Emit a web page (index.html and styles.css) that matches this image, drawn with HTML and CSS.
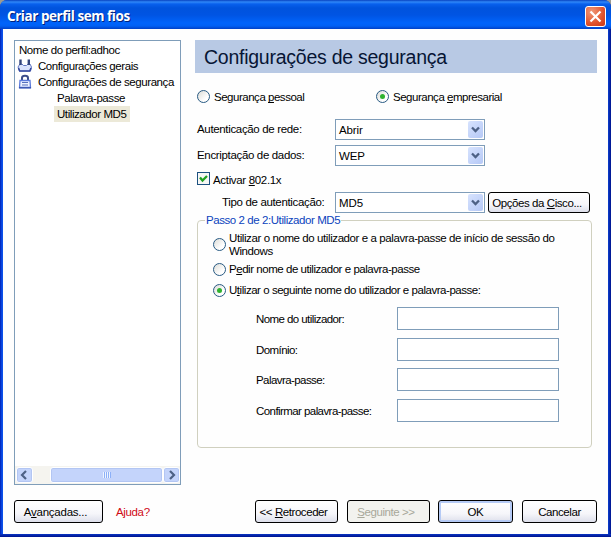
FILE: index.html
```html
<!DOCTYPE html>
<html lang="pt">
<head>
<meta charset="utf-8">
<title>Criar perfil sem fios</title>
<link rel="stylesheet" href="styles.css">
</head>
<body>
<div class="window">
  <header class="titlebar">
    <h1>Criar perfil sem fios</h1>
    <button class="close" aria-label="Fechar"><svg width="19" height="19" viewBox="0 0 19 19"><path d="M4.500 4.500l10 10M14.500 4.500l-10 10" stroke="#fff" stroke-width="2.200"/></svg></button>
  </header>
  <div class="client">
    <main class="panes">
      <nav class="tree">
        <ul>
          <li class="root">Nome do perfil:adhoc</li>
          <li class="node"><svg width="16" height="16" viewBox="0 0 16 16"><path d="M3 6h2l1.500 1.500h3L11 6h2l1.500 3-1 4h-11L1 9z" fill="#dbe3fc" stroke="#6479c4"/><path d="M1.500 10l1.200 3h10.100l1.200-3" fill="none" stroke="#3549a0" stroke-width="1.600"/><path d="M3.500 1.500v5.500M11.800 1.500v5.500" stroke="#34457c" stroke-width="2.400"/></svg><span>Configurações gerais</span></li>
          <li class="node"><svg width="16" height="16" viewBox="0 0 16 16"><path d="M5 7V4Q5 1.800 8 1.800T11 4v3" fill="none" stroke="#3c4d8a" stroke-width="2"/><path d="M3 6.500h10l.5 7h-11z" fill="#eef2ff" stroke="#5c7bdc" stroke-width="1.300"/><path d="M5 8.500h6M5 11h6" stroke="#5670bd" stroke-width="1.200"/><path d="M2 13.700h12" stroke="#3c58b4" stroke-width="1.600"/></svg><span>Configurações de segurança</span></li>
          <li class="leaf">Palavra-passe</li>
          <li class="leaf"><span class="current">Utilizador MD5</span></li>
        </ul>
        <div class="scrollbar">
          <span class="arrow"><svg width="16" height="15" viewBox="0 0 16 15"><path d="M9 3l-4 4 4 4" fill="none" stroke="#4d6185" stroke-width="2.200"/></svg></span>
          <span class="thumb"><i></i></span>
          <span class="arrow"><svg width="16" height="15" viewBox="0 0 16 15"><path d="M6 3l4 4-4 4" fill="none" stroke="#4d6185" stroke-width="2.200"/></svg></span>
        </div>
      </nav>
      <section class="content">
        <h2>Configurações de segurança</h2>
        <div class="modes">
          <label class="mode"><i class="radio"></i><span>Segurança <u>p</u>essoal</span></label>
          <label class="mode"><i class="radio on"></i><span>Segurança <u>e</u>mpresarial</span></label>
        </div>
        <div class="row"><span class="label">Autenticação de rede:</span><div class="select"><span>Abrir</span><b><svg width="15" height="17" viewBox="0 0 15 17"><path d="M4 6.500l3.500 3.500L11 6.500" fill="none" stroke="#4d6185" stroke-width="2.300"/></svg></b></div></div>
        <div class="row enc"><span class="label">Encriptação de dados:</span><div class="select"><span>WEP</span><b><svg width="15" height="17" viewBox="0 0 15 17"><path d="M4 6.500l3.500 3.500L11 6.500" fill="none" stroke="#4d6185" stroke-width="2.300"/></svg></b></div></div>
        <label class="check"><i><svg width="11" height="11" viewBox="0 0 11 11"><path d="M2 4.500l2.500 3L9 3" fill="none" stroke="#21a121" stroke-width="2.300"/></svg></i><span>Activar <u>8</u>02.1x</span></label>
        <div class="row auth"><span class="label">Tipo de autenticação:</span><div class="select"><span>MD5</span><b><svg width="15" height="17" viewBox="0 0 15 17"><path d="M4 6.500l3.500 3.500L11 6.500" fill="none" stroke="#4d6185" stroke-width="2.300"/></svg></b></div><button class="btn cisco">Opções da <u>C</u>isco...</button></div>
        <fieldset>
          <legend>Passo 2 de 2:Utilizador MD5</legend>
          <label class="opt first"><i class="radio"></i><span>Utilizar o nome do utilizador e a palavra-passe de início de sessão do<br>Windows</span></label>
          <label class="opt second"><i class="radio"></i><span>P<u>e</u>dir nome de utilizador e palavra-passe</span></label>
          <label class="opt third"><i class="radio on"></i><span>U<u>t</u>ilizar o seguinte nome do utilizador e palavra-passe:</span></label>
          <div class="fields">
            <span>Nome do utilizador:</span><input type="text">
            <span>Domínio:</span><input type="text">
            <span>Palavra-passe:</span><input type="text">
            <span>Confirmar palavra-passe:</span><input type="text">
          </div>
        </fieldset>
      </section>
    </main>
    <footer>
      <button class="btn adv">A<u>v</u>ançadas...</button>
      <a class="help">Ajuda?</a>
      <button class="btn back">&lt;&lt; <u>R</u>etroceder</button>
      <button class="btn next" disabled><u>S</u>eguinte &gt;&gt;</button>
      <button class="btn ok">OK</button>
      <button class="btn cancel">Cancelar</button>
    </footer>
  </div>
</div>
</body>
</html>
```
FILE: styles.css
```css
* { box-sizing: border-box; }
body { margin: 0; background: #9d9b91; font: 11.5px/16px "Liberation Sans", Arial, sans-serif; letter-spacing: -0.43px; color: #000; white-space: nowrap; overflow: hidden; }
svg { display: block; flex: none; }
u { text-decoration: underline; text-underline-offset: 1px; text-decoration-thickness: 1px; text-decoration-skip-ink: none; }
.window { width: 611px; height: 537px; display: flex; flex-direction: column; background: linear-gradient(transparent 534px, #0a35c4 534px, #00138c), linear-gradient(90deg, #0020b5, #0b50ea 2px, #0b50ea 3px, #0b3fd0 608px, #00138c); border-radius: 7px 7px 0 0; overflow: hidden; }
.titlebar { height: 29px; flex: none; display: flex; align-items: center; justify-content: space-between; padding: 3px 5px 0 7px; background: linear-gradient(#0842c0 0, #2f87f8 2px, #0860ed 4px, #0053dd 8px, #0054e3 15px, #0064fb 23px, #0060f4 26px, #0040c6 29px); }
h1 { margin: 0; color: #fff; font: bold 13.5px/20px "Open Sans", "Noto Sans", sans-serif; letter-spacing: -0.45px; text-shadow: 1px 1px #00227c; }
.close { width: 21px; height: 21px; padding: 0; border: 1px solid #fff; border-radius: 3px; background: radial-gradient(circle at 30% 25%, #ef9878, #e1532d 60%, #c73613); }
.client { flex: 1; margin: 0 3px 3px; background: #fefefe; padding: 11px 11px 0; }
.panes { display: flex; gap: 14px; height: 445px; }
.tree { width: 167px; border: 1px solid #7f9db9; display: flex; flex-direction: column; justify-content: space-between; background: #fff; }
ul { list-style: none; margin: 0; padding: 1px 0 0 2px; }
li { height: 16px; display: flex; }
.root { padding-left: 2px; }
.node { gap: 5px; }
.leaf { padding-left: 40px; }
.current { background: #ece9d8; margin-left: -3px; padding: 0 4px 0 3px; }
.scrollbar { display: flex; height: 18px; padding: 1px 0 1px 1px; background: #f5f4ef; }
.arrow, .thumb { border: 1px solid #fff; border-radius: 3px; background: #c4d4fb; box-shadow: inset 0 0 0 1px #b3c6f3; overflow: hidden; }
.arrow { width: 17px; }
.thumb { width: 113px; margin-left: 17px; display: flex; justify-content: center; align-items: center; }
.thumb i { width: 8px; height: 6px; background: repeating-linear-gradient(90deg, #eef4fe 0 1px, #8cb0f8 1px 2px); }
.content { width: 402px; }
h2 { margin: 0; height: 33px; padding-left: 9px; background: #b8c9e4; color: #071535; font: 19.5px/35px "Liberation Sans", Arial, sans-serif; letter-spacing: -0.25px; }
.modes { display: grid; grid-template-columns: 179px auto; padding: 16px 0 0 2px; height: 46px; letter-spacing: -0.48px; }
.mode { display: flex; gap: 4px; height: 16px; }
.radio { flex: none; width: 13px; height: 13px; margin-top: 1px; border: 1px solid #285a83; border-radius: 50%; background: linear-gradient(135deg, #dcdcd7, #fff 70%); display: grid; place-items: center; }
.radio.on::after { content: ""; width: 5px; height: 5px; border-radius: 50%; background: #2fb22f; }
.row { display: flex; height: 21px; }
.label { line-height: 20px; width: 138px; margin-left: 2px; letter-spacing: -0.34px; }
.enc { margin-top: 5px; }
.select { width: 150px; height: 21px; border: 1px solid #7f9db9; background: #fff; padding: 1px 1px 1px 3px; display: flex; justify-content: space-between; line-height: 18px; letter-spacing: -0.1px; }
.select b { width: 15px; height: 17px; border-radius: 2px; background: linear-gradient(135deg, #d7e3fe, #b5c8f6); }
.check { display: flex; height: 16px; gap: 3px; margin: 6px 0 0 2px; letter-spacing: -0.33px; }
.check i { width: 13px; height: 13px; margin-top: 0; border: 1px solid #1c5180; background: #f7f7f5; }
.auth { margin-top: 4px; }
.auth .label { width: 113px; margin-left: 27px; }
.btn { font: inherit; letter-spacing: inherit; color: #000; padding: 0; height: 23px; border: 1px solid #000; border-radius: 3px; background: linear-gradient(#fff, #f6f6fa 60%, #dddfeb); }
.cisco { width: 102px; height: 21px; margin-left: 3px; padding-right: 4px; }
fieldset { min-width: 0; width: 395px; height: 235px; margin: 0 0 0 2px; padding: 0; border: 1px solid #d0d0bf; border-radius: 4px; }
legend { height: 15px; line-height: 15px; margin-left: 7px; padding: 0 1px; color: #0b43bd; }
.opt { display: flex; gap: 3px; margin-left: 15px; line-height: 13px; letter-spacing: -0.46px; }
.opt .radio { margin-top: 0; }
.first { margin-top: 4px; letter-spacing: -0.41px; }
.opt.first .radio { margin-top: 6px; }
.second { margin-top: 5px; }
.third { margin-top: 8px; }
.fields { display: grid; grid-template-columns: 141px 162px; grid-auto-rows: 23px; row-gap: 7.700px; margin: 10px 0 0 58px; line-height: 24px; letter-spacing: -0.57px; }
input { width: 162px; height: 23px; border: 1px solid #7f9db9; background: #fff; padding: 0; }
footer { display: flex; margin-top: 15px; height: 23px; }
.adv { width: 89px; padding-right: 6px; letter-spacing: -0.25px; }
.help { margin-left: 13px; width: 139px; color: #d00b16; line-height: 24px; letter-spacing: -0.35px; }
.back { width: 83px; padding-right: 6px; }
.next { width: 83px; padding-right: 5px; margin-left: 9px; background: #f2f2ee; color: #a8a89a; }
.ok { width: 75px; margin-left: 8px; box-shadow: inset 0 0 0 2px #b5caf5; }
.cancel { width: 75px; margin-left: 9px; }
```
